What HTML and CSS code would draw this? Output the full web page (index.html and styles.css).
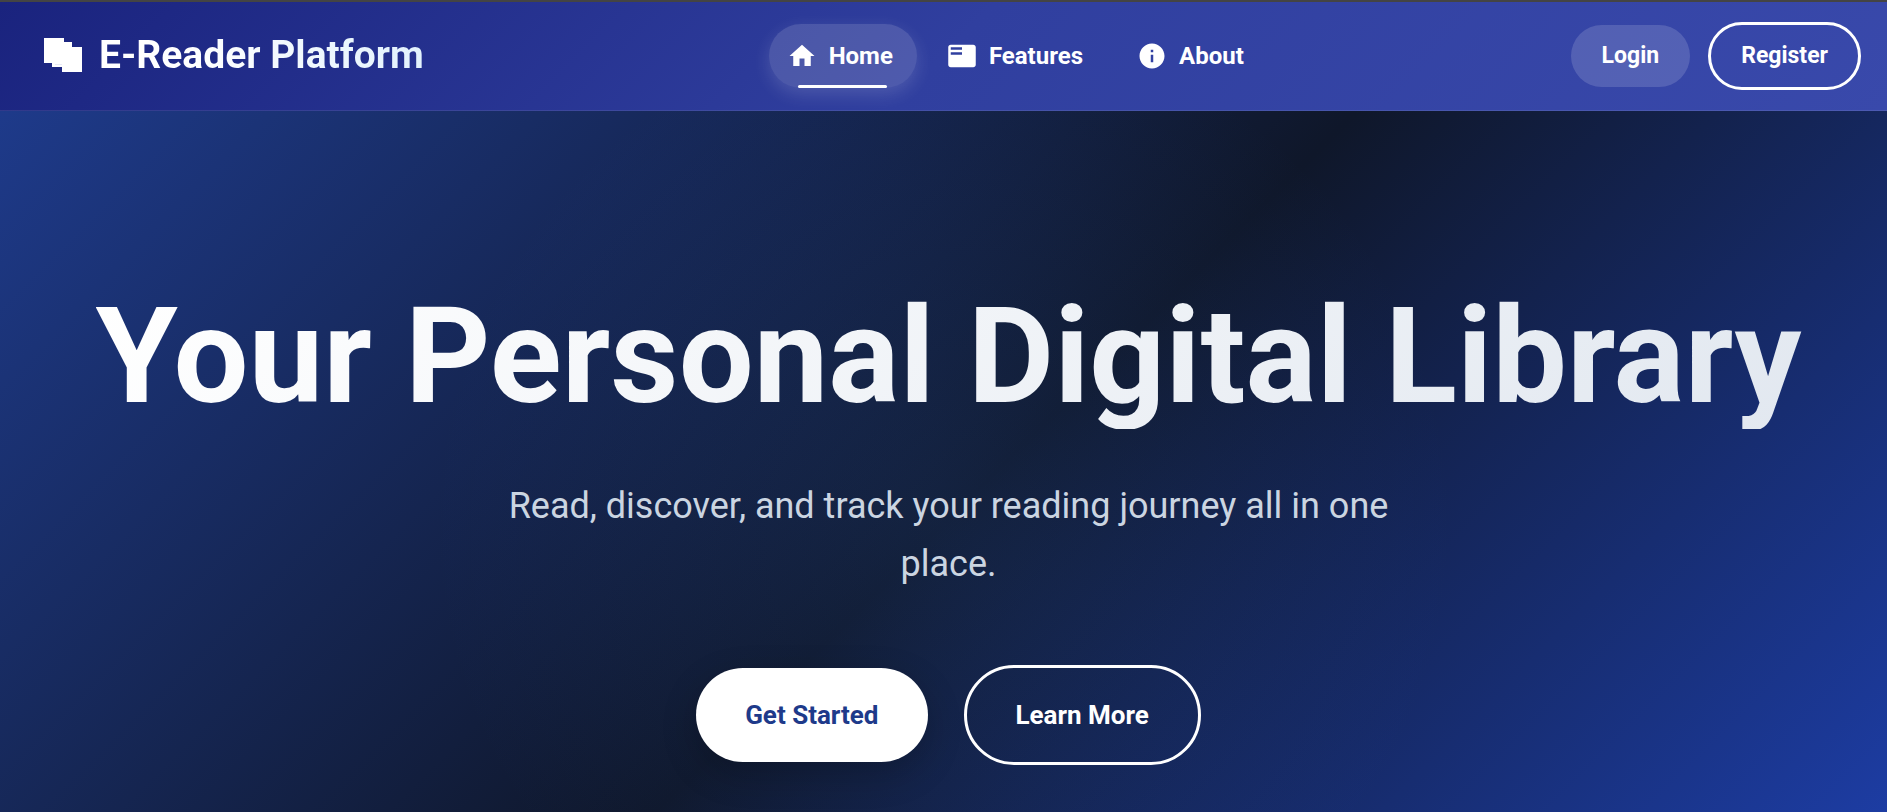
FILE: index.html
```html
<!DOCTYPE html>
<html lang="en">
<head>
<meta charset="utf-8">
<title>E-Reader Platform</title>
<meta name="viewport" content="width=device-width, initial-scale=1">
<link rel="stylesheet" href="styles.css">
</head>
<body>
<header class="navbar">
  <a class="brand" href="#">
    <svg class="brand-icon" viewBox="0 0 54 54" aria-hidden="true">
      <path fill="#fff" d="M8 10h20v4h8v5h10v25H26v-5H16v-4H8z"/>
      <path fill="#e8eaf6" d="M19 36h7v1h-7z"/>
    </svg>
    <span class="brand-name">E-Reader Platform</span>
  </a>
  <nav class="nav-links" aria-label="Main">
    <a class="nav-link nav-link-active" href="#" aria-current="page">
      <svg class="nav-icon" viewBox="0 0 24 24" aria-hidden="true"><path d="M10 20v-6h4v6h5v-8h3L12 3 2 12h3v8z"/></svg>
      Home
    </a>
    <a class="nav-link" href="#features">
      <svg class="nav-icon" viewBox="0 0 24 24" aria-hidden="true"><path d="M21 3H3c-1.1 0-2 .9-2 2v14c0 1.1.9 2 2 2h18c1.1 0 2-.9 2-2V5c0-1.1-.9-2-2-2zm-9 8H3V9h9v2zm0-4H3V5h9v2z"/></svg>
      Features
    </a>
    <a class="nav-link" href="#about">
      <svg class="nav-icon" viewBox="0 0 24 24" aria-hidden="true"><path d="M12 2C6.480 2 2 6.480 2 12s4.480 10 10 10 10-4.480 10-10S17.520 2 12 2zm1 15h-2v-6h2v6zm0-8h-2V7h2v2z"/></svg>
      About
    </a>
  </nav>
  <div class="nav-actions">
    <button class="button button-login" type="button">Login</button>
    <button class="button button-register" type="button">Register</button>
  </div>
</header>
<main class="hero">
  <h1 class="hero-title">Your Personal Digital Library</h1>
  <p class="hero-text">Read, discover, and track your reading journey all in one place.</p>
  <div class="hero-actions">
    <button class="button button-start" type="button">Get Started</button>
    <button class="button button-more" type="button">Learn More</button>
  </div>
</main>
</body>
</html>
```
FILE: styles.css
```css
* {
  box-sizing: border-box;
}

html {
  scrollbar-width: none;
}

body {
  margin: 0;
  border-top: 2px solid #444;
  font-family: Roboto, "Liberation Sans", sans-serif;
  color: #fff;
  background: #0f172a;
}

.navbar {
  display: flex;
  align-items: center;
  justify-content: space-between;
  padding: 20px 26px 20px 36px;
  border-bottom: 1px solid rgba(255, 255, 255, 0.1);
  background: linear-gradient(135deg, #1a237e 0%, #303f9f 50%, #3949ab 100%);
}

.brand {
  display: flex;
  align-items: center;
  gap: 9px;
  padding: 0 42px 2px 0;
  color: #fff;
  text-decoration: none;
}

.brand-icon {
  width: 54px;
  height: 54px;
}

.brand-name {
  font-size: 39px;
  font-weight: 700;
  line-height: 54px;
  color: transparent;
  background: linear-gradient(45deg, #fff 30%, #e3f2fd 90%);
  background-clip: text;
}

.nav-links {
  display: flex;
  gap: 12px;
}

.nav-link {
  position: relative;
  display: flex;
  align-items: center;
  gap: 12px;
  height: 64px;
  padding: 0 24px 0 18px;
  border-radius: 50px;
  color: #fff;
  font-size: 24px;
  font-weight: 700;
  text-decoration: none;
}

.nav-link-active {
  background: rgba(255, 255, 255, 0.15);
  box-shadow: 0 6px 18px rgba(255, 255, 255, 0.15);
}

.nav-link-active::after {
  content: "";
  position: absolute;
  bottom: 0;
  left: 20%;
  right: 20%;
  height: 3px;
  border-radius: 2px;
  background: #fff;
}

.nav-icon {
  width: 30px;
  height: 30px;
  fill: currentColor;
}

.nav-actions {
  display: flex;
  align-items: center;
  gap: 18px;
}

.button {
  font-family: inherit;
  font-size: 23px;
  font-weight: 700;
  line-height: 38px;
  border: 0;
  border-radius: 50px;
  color: #fff;
  background: transparent;
  cursor: pointer;
}

.button-login {
  padding: 12px 31px;
  background: rgba(255, 255, 255, 0.15);
}

.button-register {
  padding: 12px 30px;
  border: 3px solid #fff;
}

.hero {
  display: flex;
  flex-direction: column;
  align-items: center;
  padding: 173px 38px 173px 48px;
  text-align: center;
  background:
    radial-gradient(circle at 50% 50%, rgba(59, 130, 246, 0.1) 0%, rgba(59, 130, 246, 0) 50%),
    linear-gradient(135deg, #1e3a8a 0%, #0f172a 50%, #1e40af 100%);
}

.hero-title {
  margin: 0 0 48px;
  font-size: 133px;
  font-weight: 700;
  line-height: 145px;
  color: transparent;
  background: linear-gradient(135deg, #fff 0%, #e2e8f0 100%);
  background-clip: text;
}

.hero-text {
  max-width: 900px;
  margin: 0 0 72px;
  font-size: 36px;
  line-height: 58px;
  color: #cbd5e1;
}

.hero-actions {
  display: flex;
  align-items: center;
  gap: 36px;
}

.button-start,
.button-more {
  font-size: 26px;
  line-height: 46px;
  padding: 24px 49px;
}

.button-start {
  color: #1e3a8a;
  background: #fff;
  box-shadow: 0 12px 36px rgba(0, 0, 0, 0.2);
}

.button-more {
  border: 3px solid #fff;
}
```
